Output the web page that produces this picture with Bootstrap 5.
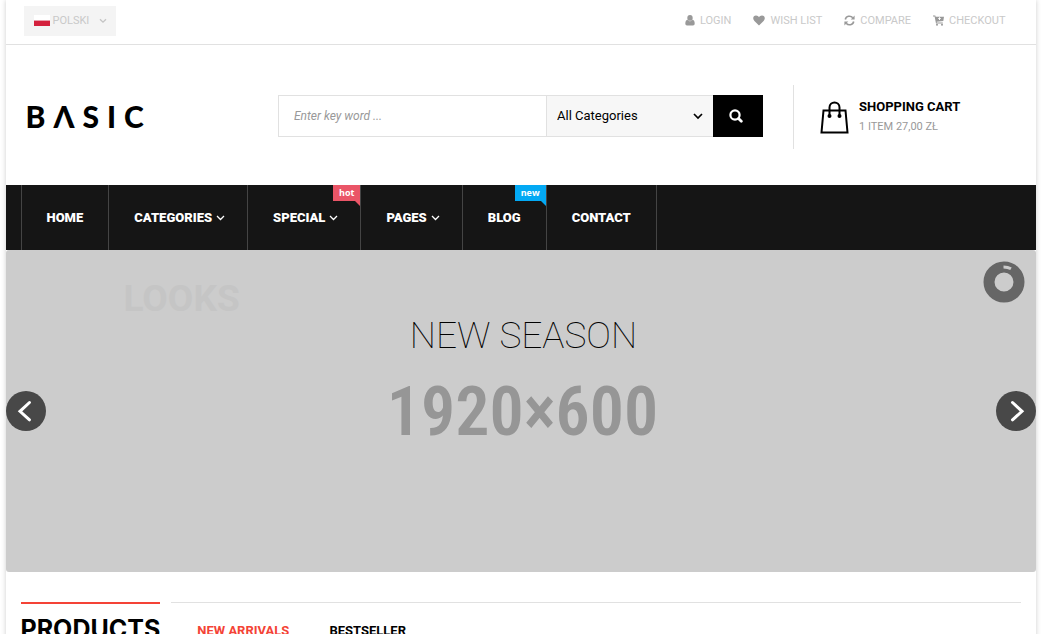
<!DOCTYPE html>
<html lang="en">
<head>
<meta charset="utf-8">
<meta name="viewport" content="width=device-width, initial-scale=1">
<title>Basic store</title>
<link href="https://cdn.jsdelivr.net/npm/bootstrap@5.3.0/dist/css/bootstrap.min.css" rel="stylesheet">
<style>
body { font-family: Roboto, "Liberation Sans", sans-serif; font-size: 13px; line-height: 20px; color: #000; background: #fff; }
a { color: inherit; text-decoration: none; }
svg { display: block; flex: none; }
.page { width: calc(100% - 11px); margin: 0 auto; box-shadow: 0 0 5px rgba(0,0,0,.2); }
.topbar { height: 45px; padding: 0 30px 2px 18px; border-bottom: 1px solid #e1e1e1; font-size: 11px; color: #c9c9c9; }
.topbar svg { color: #999; }
.lang { height: 30px; padding: 0 9px 1px 10px; border: 0; background: #f4f4f4; color: #c9c9c9; gap: 3px; }
.lang .caret { margin-left: 7px; color: #c4c4c4; }
.top-links { gap: 22px; padding-bottom: 1px; }
.top-links a { gap: 5px; }
.masthead { --bs-gutter-x: 30px; height: 140px; margin: 0; padding-top: 2px; }
.brand { font-family: Lato, sans-serif; font-weight: 900; font-size: 30px; line-height: 40px; letter-spacing: 8px; padding-left: 5px; }
.search { height: 42px; }
.search input { flex: 1; min-width: 0; padding: 0 15px; border: 1px solid #e1e1e1; border-right: 0; font-size: 12px; font-style: italic; }
.search input::placeholder { color: #999; }
.picker { width: 167px; }
.picker select { width: 100%; height: 42px; padding: 0 10px; appearance: none; border: 1px solid #e1e1e1; border-right: 0; border-radius: 0; background: #f7f7f7; color: #000; }
.picker svg { right: 10px; top: 18px; pointer-events: none; }
.go { width: 50px; border: 0; background: #000; color: #fff; padding: 0 5px 0 0; }
.minicart { height: 64px; margin-top: 2px; padding-left: 26px; gap: 10px; border-left: 1px solid #e1e1e1; }
.minicart b { font-weight: 700; }
.minicart small { display: block; font-size: 11px; color: #999; }
.mainnav { background: #151515; padding-left: 15px; }
.mainnav ul { border-left: 1px solid #444; }
.mainnav li { border-right: 1px solid #444; }
.mainnav .nav-link { height: 65px; padding: 0 25px; gap: 4px; color: #fff; font-weight: 900; }
.mainnav .has-menu { padding-right: 22px; }
.flag-tip { top: 0; right: 0; height: 16px; padding: 0 6px; font: 700 9px/16px "Open Sans", sans-serif; color: #fff; background: var(--tip); }
.flag-tip::after { content: ""; position: absolute; right: 0; top: 16px; border-top: 5px solid var(--tip); border-left: 5px solid transparent; }
.hot { --tip: #ea5567; }
.new { --tip: #03a9f4; }
.hero { aspect-ratio: 16 / 5; background: #ccc; border-radius: 3px; }
.ghost { left: 118px; top: 29px; font-size: 37px; line-height: 40px; font-weight: 700; color: #c5c5c5; }
.headline { margin: 0; padding: 66px 0 0 6px; font-size: 37px; line-height: 40px; font-weight: 100; }
.dims { font-family: "Roboto Condensed", Roboto, sans-serif; font-weight: 600; font-size: 68px; line-height: 80px; padding: 16px 0 0 4px; color: #969696; }
.arrow { top: 141px; width: 40px; height: 40px; padding: 0; border: 0; background: #484848; color: #fff; }
.timer { right: 11px; top: 11px; }
.products { padding: 30px 15px 0; gap: 11px; }
.products h2 { margin: 0; padding-top: 11px; border-top: 2px solid #f44336; font: 700 25px/28px Inter, sans-serif; }
.tabs { border-top: 1px solid #e1e1e1; padding: 18px 26px 0; gap: 40px; }
.tabs button { border: 0; background: none; padding: 0; font-weight: 700; color: #000; line-height: 20px; }
.tabs button.on { color: #f44336; }
</style>
</head>
<body>
<div class="page">
  <header>
    <div class="topbar d-flex align-items-center justify-content-between">
      <button class="lang d-flex align-items-center" type="button">
        <svg width="16" height="11" viewBox="0 0 16 11"><path fill="#fff" d="M0 0h16v5H0z"/><path fill="#d4213d" d="M0 5h16v6H0z"/><path fill="#e9a0ac" d="M0 5h16v1H0z"/></svg>
        <span>POLSKI</span>
        <svg class="caret" width="8" height="6" viewBox="0 0 8 6" fill="none" stroke="currentColor" stroke-width="1.3"><path d="M1 1.2 4 4.2 7 1.2"/></svg>
      </button>
      <nav class="top-links d-flex" aria-label="Account">
        <a href="#" class="d-flex align-items-center"><svg width="10" height="11" viewBox="0 0 10 11" fill="currentColor"><path d="M5 0a2.7 2.9 0 0 1 0 5.8A2.7 2.9 0 0 1 5 0zM2.3 4.8Q5 7.8 7.7 4.8 9.7 5.2 9.7 8.8 9.7 10.6 8 10.6H2Q.3 10.6.3 8.8.3 5.2 2.3 4.8z"/></svg>LOGIN</a>
        <a href="#" class="d-flex align-items-center"><svg width="12" height="11" viewBox="0 0 12 11" fill="currentColor"><path d="M6 10.5 1.4 6C-.8 3.6.2.7 3 .6 4.500.6 5.400 1.500 6 2.300 6.600 1.500 7.500.6 9 .6c2.800.1 3.800 3 1.600 5.400z"/></svg>WISH LIST</a>
        <a href="#" class="d-flex align-items-center"><svg width="11" height="11" viewBox="0 0 11 11"><g fill="none" stroke="currentColor" stroke-width="1.6"><path d="M1.300 4.500C2 .9 6.600.2 8.800 2.800M9.700 6.500C9 10.100 4.400 10.800 2.200 8.200"/></g><path fill="currentColor" d="M10.600.6v4H6.700zM.4 10.400v-4h3.900z"/></svg>COMPARE</a>
        <a href="#" class="d-flex align-items-center"><svg width="11" height="11" viewBox="0 0 11 11" fill="currentColor"><path fill-rule="evenodd" d="M0 .5h2.300l.3 1.200H11L10.300 6 3.700 6.800l.1.800h6v1H3L1.600 1.500H0zM6 2.200v1H5v.8h1v1h1V4h1v-.8H7v-1z"/><circle cx="4" cy="9.800" r="1"/><circle cx="9" cy="9.800" r="1"/></svg>CHECKOUT</a>
      </nav>
    </div>
    <div class="masthead row align-items-center">
      <div class="col-3"><a href="#" class="brand">BΛSIC</a></div>
      <div class="col-6">
        <form class="search d-flex" role="search">
          <input type="text" placeholder="Enter key word ..." aria-label="Search">
          <div class="picker position-relative">
            <select aria-label="Category"><option>All Categories</option></select>
            <svg class="position-absolute" width="10" height="7" viewBox="0 0 10 7" fill="none" stroke="#000" stroke-width="1.700"><path d="M1 1 5 5 9 1"/></svg>
          </div>
          <button class="go d-flex align-items-center justify-content-center" type="button" aria-label="Search"><svg width="14" height="14" viewBox="0 0 14 14" fill="none" stroke="currentColor"><circle cx="6" cy="6" r="4.600" stroke-width="2.200"/><path stroke-width="2.800" stroke-linecap="round" d="m9.500 9.500 2.800 2.800"/></svg></button>
        </form>
      </div>
      <div class="col-3">
        <a href="#" class="minicart d-flex align-items-center">
          <svg width="29" height="34" viewBox="0 0 28 34" fill="none" stroke="#000" stroke-width="2"><path d="M3 10.500h22L27 32.500H1z"/><path d="M9 16V7.500C9 .8 19 .8 19 7.500V16"/><g fill="#000" stroke="none"><circle cx="9" cy="16" r="2"/><circle cx="19" cy="16" r="2"/></g></svg>
          <span><b>SHOPPING CART</b><small>1 ITEM 27,00 ZŁ</small></span>
        </a>
      </div>
    </div>
  </header>
  <nav class="mainnav d-flex" aria-label="Main">
    <ul class="nav">
      <li><a href="#" class="nav-link d-flex align-items-center">HOME</a></li>
      <li><a href="#" class="nav-link has-menu d-flex align-items-center">CATEGORIES <svg width="9" height="6" viewBox="0 0 9 6" fill="none" stroke="currentColor" stroke-width="1.300"><path d="m1 1 3.500 3.500L8 1"/></svg></a></li>
      <li class="position-relative"><a href="#" class="nav-link has-menu d-flex align-items-center">SPECIAL <svg width="9" height="6" viewBox="0 0 9 6" fill="none" stroke="currentColor" stroke-width="1.300"><path d="m1 1 3.500 3.500L8 1"/></svg></a><span class="flag-tip hot position-absolute">hot</span></li>
      <li><a href="#" class="nav-link has-menu d-flex align-items-center">PAGES <svg width="9" height="6" viewBox="0 0 9 6" fill="none" stroke="currentColor" stroke-width="1.300"><path d="m1 1 3.500 3.500L8 1"/></svg></a></li>
      <li class="position-relative"><a href="#" class="nav-link d-flex align-items-center">BLOG</a><span class="flag-tip new position-absolute">new</span></li>
      <li><a href="#" class="nav-link d-flex align-items-center">CONTACT</a></li>
    </ul>
  </nav>
  <main>
    <section class="hero position-relative text-center">
      <span class="ghost position-absolute">LOOKS</span>
      <h1 class="headline">NEW SEASON</h1>
      <div class="dims">1920×600</div>
      <button class="arrow rounded-circle position-absolute start-0" type="button" aria-label="Previous"><svg width="40" height="40" viewBox="0 0 40 40" fill="none" stroke="currentColor" stroke-width="3" stroke-linecap="round"><path d="M23.500 11.500 14 20.300l9.500 8.500"/></svg></button>
      <button class="arrow rounded-circle position-absolute end-0" type="button" aria-label="Next"><svg width="40" height="40" viewBox="0 0 40 40" fill="none" stroke="currentColor" stroke-width="3" stroke-linecap="round"><path d="m16.500 11.500 9.500 8.800-9.500 8.500"/></svg></button>
      <svg class="timer position-absolute" width="42" height="42" viewBox="0 0 42 42" fill="none"><circle cx="21" cy="21" r="15" stroke="#666" stroke-width="11"/><path d="M20.500 6q4.500 0 7.500 1.800" stroke="#ccc" stroke-width="2.800"/></svg>
    </section>
    <section class="products d-flex">
      <h2>PRODUCTS</h2>
      <div class="tabs d-flex align-items-start flex-fill">
        <button class="on" type="button">NEW ARRIVALS</button>
        <button type="button">BESTSELLER</button>
      </div>
    </section>
  </main>
</div>
<script src="https://cdn.jsdelivr.net/npm/bootstrap@5.3.0/dist/js/bootstrap.bundle.min.js"></script>
</body>
</html>
